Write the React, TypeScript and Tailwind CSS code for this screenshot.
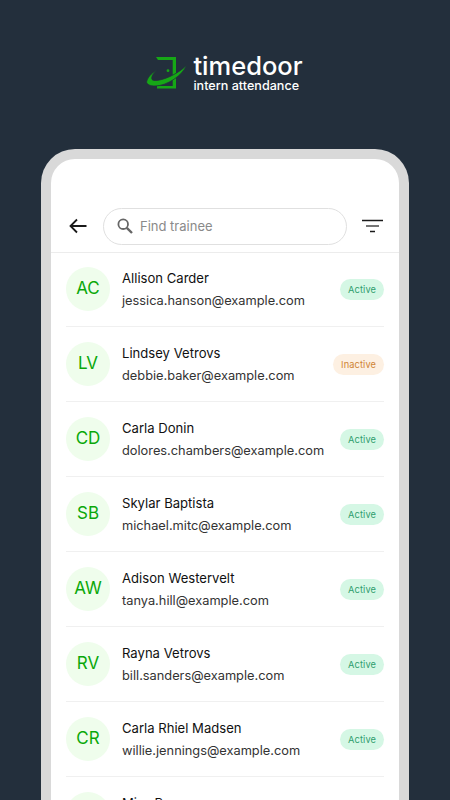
import React from 'react';

interface Trainee {
  initials: string;
  name: string;
  email: string;
  active: boolean;
}

const trainees: Trainee[] = [
  { initials: 'AC', name: 'Allison Carder', email: 'jessica.hanson@example.com', active: true },
  { initials: 'LV', name: 'Lindsey Vetrovs', email: 'debbie.baker@example.com', active: false },
  { initials: 'CD', name: 'Carla Donin', email: 'dolores.chambers@example.com', active: true },
  { initials: 'SB', name: 'Skylar Baptista', email: 'michael.mitc@example.com', active: true },
  { initials: 'AW', name: 'Adison Westervelt', email: 'tanya.hill@example.com', active: true },
  { initials: 'RV', name: 'Rayna Vetrovs', email: 'bill.sanders@example.com', active: true },
  { initials: 'CR', name: 'Carla Rhiel Madsen', email: 'willie.jennings@example.com', active: true },
  { initials: 'MB', name: 'Miss Brown', email: 'kenzi.lawson@example.com', active: true },
];

const Logo = () => (
  <svg width="46" height="36" viewBox="0 0 46 36" fill="none">
    <path d="M11 2H31V33.5H12V31H27.7V5H13Z" fill="#16a716" />
    <circle cx="23" cy="15.7" r="1.4" fill="#16a716" />
    <path
      d="M1.5 27C3 21 8 17 13 14.5C8 18 6 22 7 24.5C10 28 30 22 41.5 10.2C38 20 22 31 10 31C5 31 2 29.5 1.5 27Z"
      fill="#16a716"
      stroke="#232f3c"
      strokeWidth="0.8"
    />
  </svg>
);

const TraineeRow = ({ trainee }: { trainee: Trainee }) => (
  <div className="flex h-[75px] shrink-0 items-center border-b border-[#f0f0f0]">
    <div className="flex h-[44px] w-[44px] shrink-0 items-center justify-center rounded-full bg-[#effdec] text-[17px] text-[#0aa80a]">
      {trainee.initials}
    </div>
    <div className="ml-[12px] flex min-w-0 flex-1 flex-col gap-[5px]">
      <span className="text-[13.1px] leading-[18px] font-normal text-[#111111]">{trainee.name}</span>
      <span className="text-[12.8px] leading-[18px] whitespace-nowrap text-[#333333]">{trainee.email}</span>
    </div>
    {trainee.active ? (
      <span className="mt-[1px] rounded-full bg-[#d5f7e5] px-[8px] pt-[4px] pb-[3px] text-[9.25px] leading-[14px] font-normal tracking-[0.1px] text-[#2f9e6e]">
        Active
      </span>
    ) : (
      <span className="mt-[1px] rounded-full bg-[#fdf0e2] px-[8px] pt-[4px] pb-[3px] text-[9.25px] leading-[14px] font-normal tracking-[0.1px] text-[#cf8433]">
        Inactive
      </span>
    )}
  </div>
);

export default function App() {
  return (
    <div className="flex h-[800px] w-[450px] flex-col items-center overflow-hidden bg-[#232f3c] font-['Inter',sans-serif]">
      <div className="mt-[53px] mr-[2px] flex h-[40px] items-center gap-[2px]">
        <Logo />
        <div className="flex flex-col text-white">
          <span className="text-[25.5px] leading-[26px] font-[550]">timedoor</span>
          <span className="text-[12.6px] leading-[14px] font-[550]">intern attendance</span>
        </div>
      </div>

      <div className="mt-[56px] flex h-[800px] w-[368px] shrink-0 flex-col rounded-t-[34px] border-[10px] border-b-0 border-[#d9d9d9] bg-white">
        <div className="flex h-[94px] shrink-0 items-end border-b border-[#ececec] pr-[15px] pb-[8px] pl-[16px]">
          <div className="flex h-[36px] w-full items-center">
            <svg className="ml-[2px]" width="18" height="18" viewBox="0 0 18 18" fill="none" stroke="#1a1a1a" strokeWidth="1.8">
              <path d="M17.5 9H1.5M8 2.5L1.5 9L8 15.5" />
            </svg>
            <div className="ml-[16px] flex h-[37px] w-[244px] items-center rounded-full border border-[#e0e0e0] pl-[12px]">
              <svg width="18" height="18" viewBox="0 0 18 18" fill="none" stroke="#666666">
                <circle cx="7.2" cy="7.2" r="4.8" strokeWidth="1.8" />
                <path d="M10.8 10.8L16 16" strokeWidth="2.4" />
              </svg>
              <span className="mt-[2px] ml-[6px] text-[13px] text-[#8a8a8a]">Find trainee</span>
            </div>
            <svg className="ml-auto" width="22" height="14" viewBox="0 0 22 14" fill="none" stroke="#1a1a1a">
              <path d="M0 1.5H21" strokeWidth="1.5" />
              <path d="M4 7H17" strokeWidth="1.2" />
              <path d="M8 12.5H13" strokeWidth="1.5" />
            </svg>
          </div>
        </div>
        <div className="-mt-px flex flex-col px-[15px]">
          {trainees.map((trainee) => (
            <TraineeRow key={trainee.email} trainee={trainee} />
          ))}
        </div>
      </div>
    </div>
  );
}
